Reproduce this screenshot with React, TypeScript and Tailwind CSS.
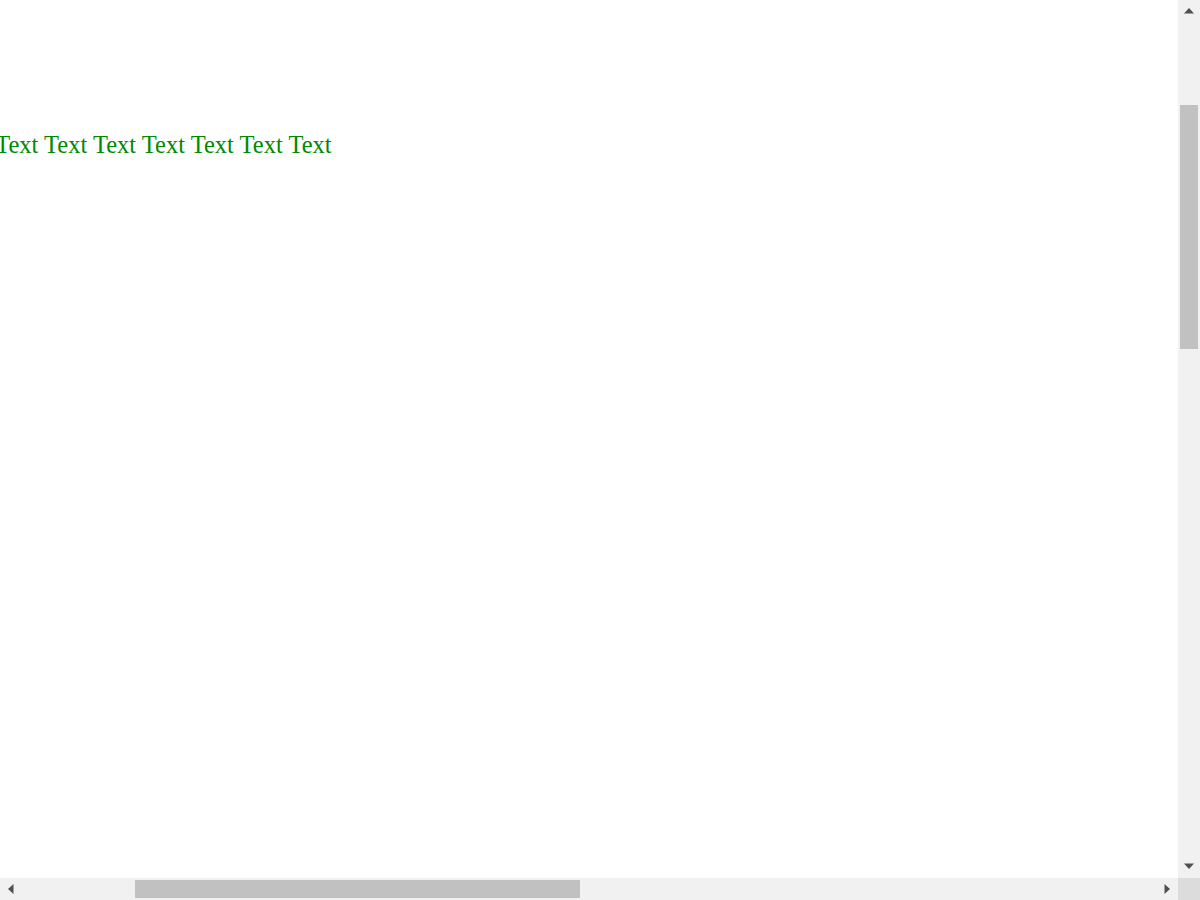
function Arrow({ dir }: { dir: 'up' | 'down' | 'left' | 'right' }) {
  const points = {
    up: '6,13.5 16,13.5 11,8',
    down: '6,7.5 16,7.5 11,13',
    left: '13.5,6 13.5,16 8,11',
    right: '8.5,6 8.5,16 14,11',
  }[dir];
  return (
    <svg width="22" height="22" viewBox="0 0 22 22" className="block">
      <polygon points={points} fill="#505050" />
    </svg>
  );
}

export default function App() {
  return (
    <div className="w-[1200px] h-[900px] flex flex-col overflow-hidden bg-white">
      <div className="flex flex-1 min-h-0">
        {/* visible part of the page, scrolled right and down */}
        <div className="flex-1 overflow-hidden bg-white">
          <p
            className="mt-[131px] ml-[-298px] text-[24.5px] leading-[28px] text-[#008a00] whitespace-nowrap"
            style={{ fontFamily: '"Liberation Serif", "Times New Roman", serif' }}
          >
            Text Text Text Text Text Text Text Text Text Text Text Text Text
          </p>
        </div>
        {/* vertical scrollbar */}
        <div className="w-[22px] flex flex-col bg-[#f1f1f1]">
          <div className="h-[22px] shrink-0">
            <Arrow dir="up" />
          </div>
          <div className="flex-1">
            <div className="mt-[83px] mx-[2px] h-[244px] bg-[#c1c1c1]" />
          </div>
          <div className="h-[22px] shrink-0">
            <Arrow dir="down" />
          </div>
        </div>
      </div>
      {/* horizontal scrollbar */}
      <div className="h-[22px] flex bg-[#f1f1f1]">
        <div className="w-[22px] shrink-0">
          <Arrow dir="left" />
        </div>
        <div className="flex-1">
          <div className="ml-[113px] my-[2px] w-[445px] h-[18px] bg-[#c1c1c1]" />
        </div>
        <div className="w-[22px] shrink-0">
          <Arrow dir="right" />
        </div>
        <div className="w-[22px] shrink-0 bg-[#dcdcdc]" />
      </div>
    </div>
  );
}
